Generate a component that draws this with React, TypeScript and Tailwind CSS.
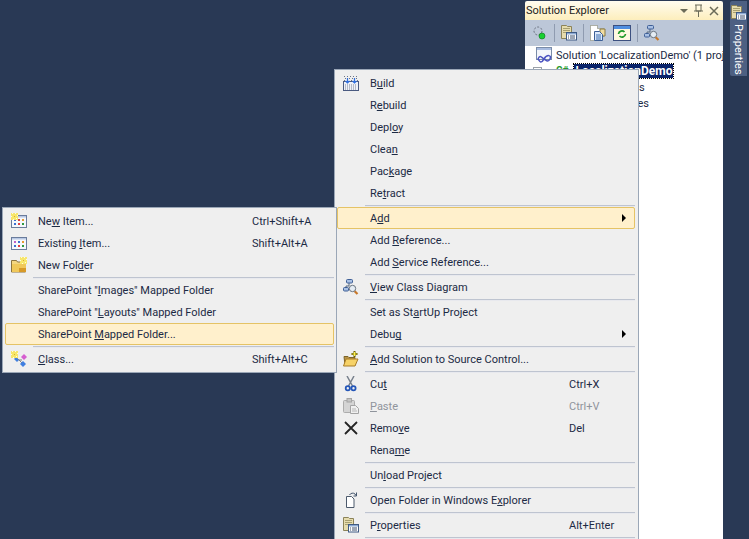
import React from "react";

const Sparkle = ({ x, y }: { x: number; y: number }) => (
  <g transform={`translate(${x} ${y})`}>
    <path d="M0 0h7v7H0z" fill="#f7e66c" />
    <path d="M1 0h1v1H1zM4 0h1v1H4zM0 3h1v1H0zM6 2h1v1H6zM2 6h1v1H2zM5 5h1v1H5z" fill="#fffbe0" />
    <path d="M3 3h1v1H3z" fill="#d8b030" />
  </g>
);
const Build = () => (
  <svg width="16" height="16" viewBox="0 0 16 16">
    <rect x="0.500" y="6.500" width="15" height="9" fill="#eef1f8" stroke="#4a5a80" />
    <path d="M1 1h1v1H1zM4 1h1v1H4zM7 1h1v1H7zM10 1h1v1h-1zM13 1h1v1h-1zM2 3h1v1H2zM6 3h1v1H6zM9 3h1v1H9zM13 3h1v1h-1zM1 5h1v1H1zM8 5h1v1H8zM14 5h1v1h-1z" fill="#6a7488" />
    <path d="M4.500 3v5M2.500 6 4.500 8l2-2M11.500 3v5M9.500 6l2 2 2-2" stroke="#2f6fe0" strokeWidth="1.200" fill="none" />
    <path d="M2 10h12M2 12h12M2 14h12" stroke="#7a8296" strokeDasharray="1 1" />
  </svg>
);
const ClassDiag = () => (
  <svg width="16" height="16" viewBox="0 0 16 16">
    <path d="M6 4v3H3v2" stroke="#55667f" fill="none" />
    <rect x="3.500" y="0.500" width="6" height="3.500" rx="1" fill="#a8c0e4" stroke="#3f5f96" />
    <rect x="0.500" y="8.500" width="5" height="3.500" rx="1" fill="#a8c0e4" stroke="#3f5f96" />
    <path d="m11.500 12 3 3" stroke="#c8782a" strokeWidth="2.200" />
    <circle cx="9.500" cy="9.500" r="3.200" fill="#e4ecf4" stroke="#6a7480" />
  </svg>
);
const FolderAdd = () => (
  <svg width="16" height="16" viewBox="0 0 16 16">
    <path d="M1 5.500h4l1 1h6v8H2z" fill="#b89448" stroke="#7c6428" />
    <path d="M0.500 15 3 8h12l-3 7z" fill="#f6d268" stroke="#a87c28" />
    <path d="M11.500 0v6M8.500 3h6" stroke="#6a6200" strokeWidth="2" />
    <path d="M11.500 1v4M9.500 3h4" stroke="#fff04a" strokeWidth="1" />
  </svg>
);
const Scissors = () => (
  <svg width="16" height="16" viewBox="0 0 16 16">
    <path d="M4 0 9.500 10M11 0 5.500 10" stroke="#78808c" strokeWidth="1.500" />
    <circle cx="4.800" cy="12.300" r="2.100" fill="none" stroke="#2456b8" strokeWidth="1.800" />
    <circle cx="10.500" cy="12.300" r="2.100" fill="none" stroke="#2456b8" strokeWidth="1.800" />
  </svg>
);
const Paste = () => (
  <svg width="16" height="16" viewBox="0 0 16 16">
    <rect x="0.500" y="2.500" width="11" height="12" rx="1" fill="#d4d4d4" stroke="#acacac" />
    <rect x="4" y="0.500" width="4.500" height="3.500" fill="#c4c4c4" stroke="#a4a4a4" />
    <path d="M7.500 7.500h5l3 3v5h-8z" fill="#f0f0f0" stroke="#a4a4a4" />
    <path d="M9 11h4M9 13h5" stroke="#b8b8b8" />
  </svg>
);
const Remove = () => (
  <svg width="16" height="16" viewBox="0 0 16 16">
    <path d="M2 2 14 14M14 2 2 14" stroke="#242424" strokeWidth="1.800" />
  </svg>
);
const OpenDoc = () => (
  <svg width="16" height="16" viewBox="0 0 16 16">
    <path d="M3.500 4.500h5l2.500 2.500v8.500H3.500z" fill="#fff" stroke="#4c5a6c" />
    <path d="M6.500 3C7.500 1 10.500 0.500 12 2l1 1.500M13.500 0.500V4H10.500" stroke="#44566e" fill="none" />
  </svg>
);
const Props = () => (
  <svg width="16" height="16" viewBox="0 0 16 16">
    <path d="M0.500 0.500h5l1 1h4v12h-10z" fill="#e6dcae" stroke="#8c8358" />
    <path d="M2 3.500h7M2 5.500h7M2 7.500h4" stroke="#a8a070" />
    <rect x="5.500" y="7.500" width="10" height="7.500" fill="#fff" stroke="#3f5a84" />
    <rect x="6" y="8" width="9" height="1.500" fill="#8aa8d2" />
    <path d="M7 11h1M9 11h5M7 13h1M9 13h5" stroke="#3c4f6c" />
  </svg>
);
const Grid = ({ star }: { star?: boolean }) => (
  <svg width="16" height="16" viewBox="0 0 16 16">
    <rect x="0.500" y="2.500" width="15" height="12" fill="#f6f8fc" stroke="#6a7c9c" />
    <rect x="1" y="3" width="14" height="1.500" fill="#b8c8e4" />
    <path d="M3 6h2v2H3z" fill={star ? "#3a70d0" : "#c060c8"} />
    <path d="M7 6h2v2H7z" fill={star ? "#d04040" : "#3a70d0"} />
    <path d="M11 6h2v2h-2z" fill="#e89a30" />
    <path d="M3 10h2v2H3z" fill="#3a70d0" />
    <path d="M7 10h2v2H7z" fill="#e04040" />
    <path d="M11 10h2v2h-2z" fill="#2e9a40" />
    {star && <Sparkle x={0} y={0} />}
  </svg>
);
const FolderNew = () => (
  <svg width="16" height="16" viewBox="0 0 16 16">
    <path d="M0.500 3.500h5l1 1.500h8v10h-14z" fill="#f4d680" stroke="#8c7440" />
    <path d="M1 7h14v8H1z" fill="#f0c85a" />
    <path d="M8 11h7v4H8z" fill="#d89a28" />
    <Sparkle x={9} y={0} />
  </svg>
);
const ClassIcon = () => (
  <svg width="16" height="16" viewBox="0 0 16 16">
    <path d="M3 5l5 4h3M8 9l3 3" stroke="#808080" fill="none" />
    <path d="M10 6l3-3 3 3-3 3z" fill="#d65fd0" />
    <path d="M9 13l3-3 3 3-3 3z" fill="#3f7fe0" />
    <path d="M3 8l2-2 3 3-2 2z" fill="#3f7fe0" />
    <Sparkle x={0} y={0} />
  </svg>
);

const M = ({ t, u }: { t: string; u?: number }) =>
  u === undefined ? (
    <>{t}</>
  ) : (
    <>
      {t.slice(0, u)}
      <span className="underline underline-offset-1 [text-decoration-skip-ink:none]">{t[u]}</span>
      {t.slice(u + 1)}
    </>
  );

type It = {
  t?: string;
  u?: number;
  k?: string;
  i?: React.ReactNode;
  hot?: boolean;
  sub?: boolean;
  off?: boolean;
  sep?: boolean;
};

const Item = ({ it, keyCol, textCol }: { it: It; keyCol: number; textCol: number }) => {
  if (it.sep)
    return (
      <div className="h-[3px] flex items-center" style={{ paddingLeft: textCol - 4, paddingRight: 0 }}>
        <div className="h-[2px] w-full bg-[#bec4d0] border-b border-[#e8e9ee]" />
      </div>
    );
  return (
    <div
      className={`h-[22px] flex items-center relative rounded-[2px] border ${
        it.hot ? "bg-[#fff0cc] border-[#e5c365]" : "border-transparent"
      } ${it.off ? "text-[#8f949c]" : "text-[#1c2a44]"}`}
    >
      <div className="w-[26px] shrink-0 flex justify-center">{it.i}</div>
      <div className="absolute whitespace-pre" style={{ left: textCol }}>
        <M t={it.t!} u={it.u} />
      </div>
      {it.k && (
        <div className="absolute whitespace-pre" style={{ left: keyCol }}>
          {it.k}
        </div>
      )}
      {it.sub && (
        <div className="absolute right-[8px] w-0 h-0 border-y-[4px] border-y-transparent border-l-[4px] border-l-black" />
      )}
    </div>
  );
};

const main: It[] = [
  { t: "Build", u: 1, i: <Build /> },
  { t: "Rebuild", u: 1 },
  { t: "Deploy", u: 4 },
  { t: "Clean", u: 4 },
  { t: "Package", u: 3 },
  { t: "Retract", u: 2 },
  { sep: true },
  { t: "Add", u: 1, hot: true, sub: true },
  { t: "Add Reference...", u: 4 },
  { t: "Add Service Reference...", u: 4 },
  { sep: true },
  { t: "View Class Diagram", u: 0, i: <ClassDiag /> },
  { sep: true },
  { t: "Set as StartUp Project", u: 9 },
  { t: "Debug", u: 4, sub: true },
  { sep: true },
  { t: "Add Solution to Source Control...", u: 0, i: <FolderAdd /> },
  { sep: true },
  { t: "Cut", u: 2, k: "Ctrl+X", i: <Scissors /> },
  { t: "Paste", u: 0, k: "Ctrl+V", off: true, i: <Paste /> },
  { t: "Remove", u: 4, k: "Del", i: <Remove /> },
  { t: "Rename", u: 4 },
  { sep: true },
  { t: "Unload Project", u: 2 },
  { sep: true },
  { t: "Open Folder in Windows Explorer", u: 24, i: <OpenDoc /> },
  { sep: true },
  { t: "Properties", u: 1, k: "Alt+Enter", i: <Props /> },
  { sep: true },
];

const sub: It[] = [
  { t: "New Item...", u: 2, k: "Ctrl+Shift+A", i: <Grid star /> },
  { t: "Existing Item...", u: 9, k: "Shift+Alt+A", i: <Grid /> },
  { t: "New Folder", u: 7, i: <FolderNew /> },
  { sep: true },
  { t: 'SharePoint "Images" Mapped Folder', u: 12 },
  { t: 'SharePoint "Layouts" Mapped Folder', u: 12 },
  { t: "SharePoint Mapped Folder...", u: 11, hot: true },
  { sep: true },
  { t: "Class...", u: 0, k: "Shift+Alt+C", i: <ClassIcon /> },
];

export default function App() {
  return (
    <div
      className="w-[749px] h-[539px] relative overflow-hidden bg-[#293955] flex text-[11px] leading-none"
      style={{ fontFamily: 'Roboto, "Noto Sans", sans-serif' }}
    >
      <div className="flex-1" />
      {/* Solution Explorer */}
      <div className="w-[198px] mt-[1px] flex flex-col text-[#1c2a44]">
        <div className="h-[19px] shrink-0 rounded-t-[2px] bg-gradient-to-b from-[#fffcf0] to-[#fdeebc] flex items-center justify-between pl-[1px] text-[11px] text-[#1c1c1c]">
          <span>Solution Explorer</span>
          <svg width="56" height="14" viewBox="0 0 56 14">
            <path d="M13 5h8l-4 4z" fill="#6b6b58" />
            <path d="M28 1h7M29 1v6h5V1M27 7h9M31.500 7v6" stroke="#6b6b58" fill="none" />
            <path d="M43 3l8 8M51 3l-8 8" stroke="#6b6b58" strokeWidth="1.500" />
          </svg>
        </div>
        <div className="h-[26px] shrink-0 bg-[#bcc7d8] flex items-center pl-[7px] gap-[3px]">
          <svg width="16" height="16" viewBox="0 0 16 16">
            <circle cx="6" cy="6" r="4" fill="none" stroke="#6a7280" strokeDasharray="2 1.500" />
            <circle cx="10" cy="11" r="3" fill="#18d030" stroke="#0a7018" strokeWidth="0.600" />
          </svg>
          <div className="w-px h-[18px] bg-[#8f9bb0] mx-[3px]" />
          <Props />
          <div className="w-px h-[18px] bg-[#8f9bb0] mx-[3px]" />
          <svg width="16" height="16" viewBox="0 0 16 16">
            <path d="M0.500 0.500h7v3h6v8h-9v4h-4z" fill="#fff" stroke="#7a7a60" strokeDasharray="1 1" />
            <path d="M10 4h5v7h-5z" fill="#f0dca0" stroke="#8a7a40" />
            <path d="M4.500 6.500h5l3 3v6h-8z" fill="#dbe8fa" stroke="#3c5f96" />
            <path d="M6 10h5M6 12h5M6 14h5" stroke="#3c6fb0" />
          </svg>
          <svg width="18" height="18" viewBox="0 0 18 18" className="ml-[4px]">
            <rect x="0.500" y="1.500" width="17" height="15" fill="#fff8e0" stroke="#3c5080" />
            <rect x="1" y="2" width="16" height="3" fill="#4f8ee0" />
            <path d="M5.500 10a3.500 3.500 0 0 1 6-2M12.500 10a3.500 3.500 0 0 1-6 2" stroke="#1f9a28" strokeWidth="1.700" fill="none" />
          </svg>
          <div className="w-px h-[18px] bg-[#8f9bb0] mx-[3px]" />
          <ClassDiag />
        </div>
        <div className="flex-1 bg-white relative">
          <div className="flex items-center h-[16px] mt-[1px] pl-[11px] whitespace-nowrap overflow-hidden">
            <svg width="16" height="16" viewBox="0 0 16 16" className="shrink-0 mr-[4px]">
              <rect x="0.500" y="0.500" width="15" height="12" fill="#f4f6fb" stroke="#7a8ca8" />
              <rect x="1" y="1" width="14" height="2" fill="#a8bce0" />
              <path d="M2 12c2-5 4-1 6 0s4 4 6 0-3-5-6 0-4 3-6 0z" fill="none" stroke="#4a52c0" strokeWidth="1.500" />
            </svg>
            Solution 'LocalizationDemo' (1 project)
          </div>
          <div className="flex items-center h-[16px] font-bold whitespace-nowrap relative">
            <div className="w-[9px] h-[9px] ml-[8px] border border-[#9aa0a8] bg-white" />
            <span className="text-[10px] text-[#2a9a30] ml-[14px] mr-[6px]">C#</span>
            <span className="bg-[#0a246a] text-white text-[12px] outline-1 outline-dotted outline-black px-[1px] h-[14px] flex items-center">
              LocalizationDemo
            </span>
          </div>
          <div className="h-[16px] flex items-center pl-[69px]">Properties</div>
          <div className="h-[16px] flex items-center pl-[69px]">References</div>
        </div>
      </div>
      {/* Properties strip */}
      <div className="w-[26px] pt-[1px] pl-[7px]">
        <div className="w-[17px] h-[75px] bg-[#4d6082] rounded-l-[2px] flex flex-col items-center pt-[4px] overflow-hidden">
          <Props />
          <span className="text-white text-[11px] mt-[3px] [writing-mode:vertical-rl]">Properties</span>
        </div>
      </div>

      {/* Main context menu */}
      <div className="absolute left-[334px] top-[69px] w-[305px] h-[480px] bg-[#efefef] border border-[#9ba7b7] pt-[2px] pl-[2px] pr-[3px]">
        {main.map((it, i) => (
          <Item key={i} it={it} keyCol={231} textCol={32} />
        ))}
      </div>

      {/* Sub menu */}
      <div className="absolute left-[2px] top-[207px] w-[335px] h-[166px] bg-[#efefef] border border-[#9ba7b7] pt-[2px] pl-[2px] pr-[2px]">
        {sub.map((it, i) => (
          <Item key={i} it={it} keyCol={246} textCol={32} />
        ))}
      </div>
    </div>
  );
}
